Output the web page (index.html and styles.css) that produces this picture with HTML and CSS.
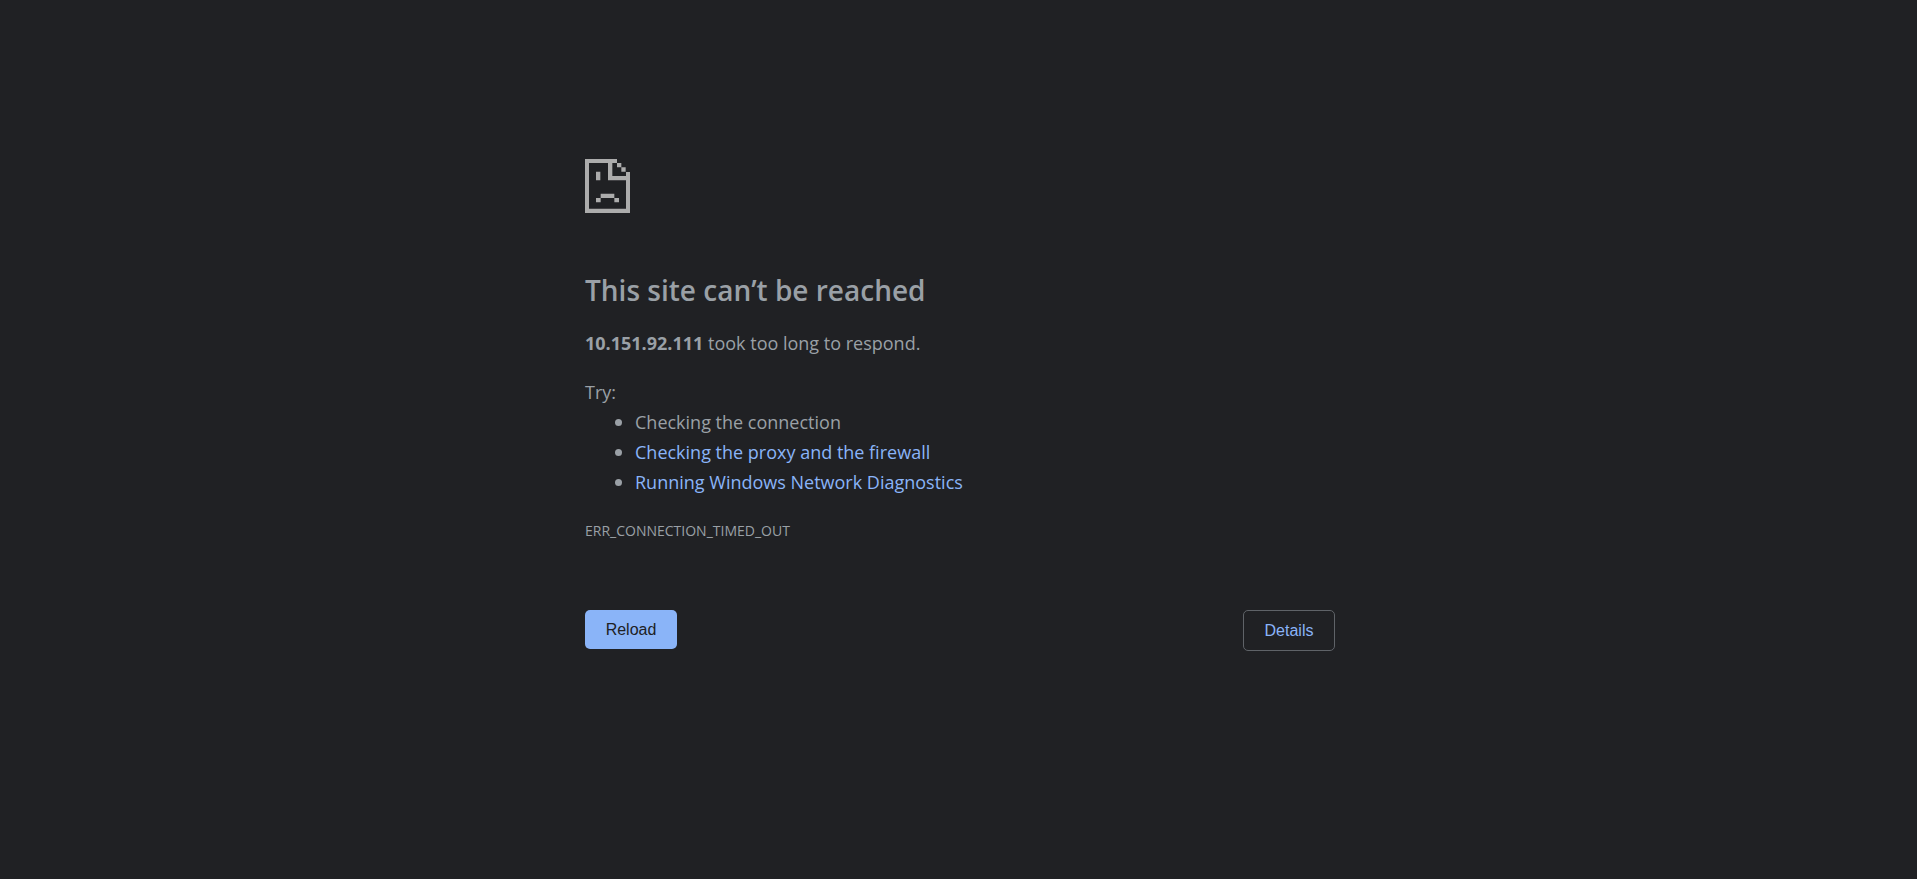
FILE: index.html
```html
<!DOCTYPE html>
<html lang="en">
<head>
<meta charset="utf-8">
<meta name="viewport" content="width=device-width, initial-scale=1">
<title>This site can’t be reached</title>
<link rel="stylesheet" href="styles.css">
</head>
<body>
<main class="wrapper">
  <svg class="icon" viewBox="0 0 135 162" aria-hidden="true">
    <path d="M0 0H96V12H82V51H135V64H69V12H12V149H123V39H135V162H0ZM96 12H109V25H96ZM109 25H122V38H109ZM33 38H46V64H33ZM47 104H88V117H47ZM33 117H47V130H33ZM88 117H102V130H88Z"/>
  </svg>
  <h1 class="title">This site can’t be reached</h1>
  <p class="summary"><strong>10.151.92.111</strong> took too long to respond.</p>
  <div class="suggestions">
    <p class="lead">Try:</p>
    <ul class="list">
      <li class="item">Checking the connection</li>
      <li class="item"><a class="link" href="#proxy">Checking the proxy and the firewall</a></li>
      <li class="item"><a class="link" href="#diagnostics">Running Windows Network Diagnostics</a></li>
    </ul>
  </div>
  <p class="code">ERR_CONNECTION_TIMED_OUT</p>
  <div class="buttons">
    <button class="button primary" type="button">Reload</button>
    <button class="button secondary" type="button">Details</button>
  </div>
</main>
</body>
</html>
```
FILE: styles.css
```css
body {
  margin: 0;
  padding-left: 3px;
  background: #202124;
  color: #9aa0a6;
  font: 18px/30px "Open Sans", "Noto Sans", sans-serif;
}
.wrapper {
  box-sizing: border-box;
  max-width: 750px;
  margin: 0 auto;
  padding-top: 159px;
}
.icon {
  display: block;
  width: 45px;
  height: 54px;
  fill: #acacac;
}
.title {
  margin: 57px 0 18px;
  font-size: 28px;
  line-height: 40px;
  font-weight: 600;
}
.summary,
.lead,
.code {
  margin: 0;
}
.suggestions {
  margin-top: 19px;
}
.list {
  margin: 0;
  padding-left: 30px;
  list-style: none;
}
.item {
  display: flex;
  align-items: center;
  gap: 13px;
}
.item::before {
  content: "";
  flex: none;
  width: 7px;
  height: 7px;
  border-radius: 50%;
  background: #9aa0a6;
}
.link {
  color: #8ab4f8;
  text-decoration: none;
}
.code {
  margin-top: 19px;
  font-size: 14px;
}
.buttons {
  display: flex;
  justify-content: space-between;
  align-items: flex-start;
  margin-top: 64px;
}
.button {
  min-width: 92px;
  padding: 10px 20px;
  border: 0;
  border-radius: 5px;
  font: 16px/19px "Liberation Sans", Arial, sans-serif;
  cursor: pointer;
}
.primary {
  background: #8ab4f8;
  color: #202124;
}
.secondary {
  border: 1px solid #5f6368;
  background: transparent;
  color: #8ab4f8;
}
```
